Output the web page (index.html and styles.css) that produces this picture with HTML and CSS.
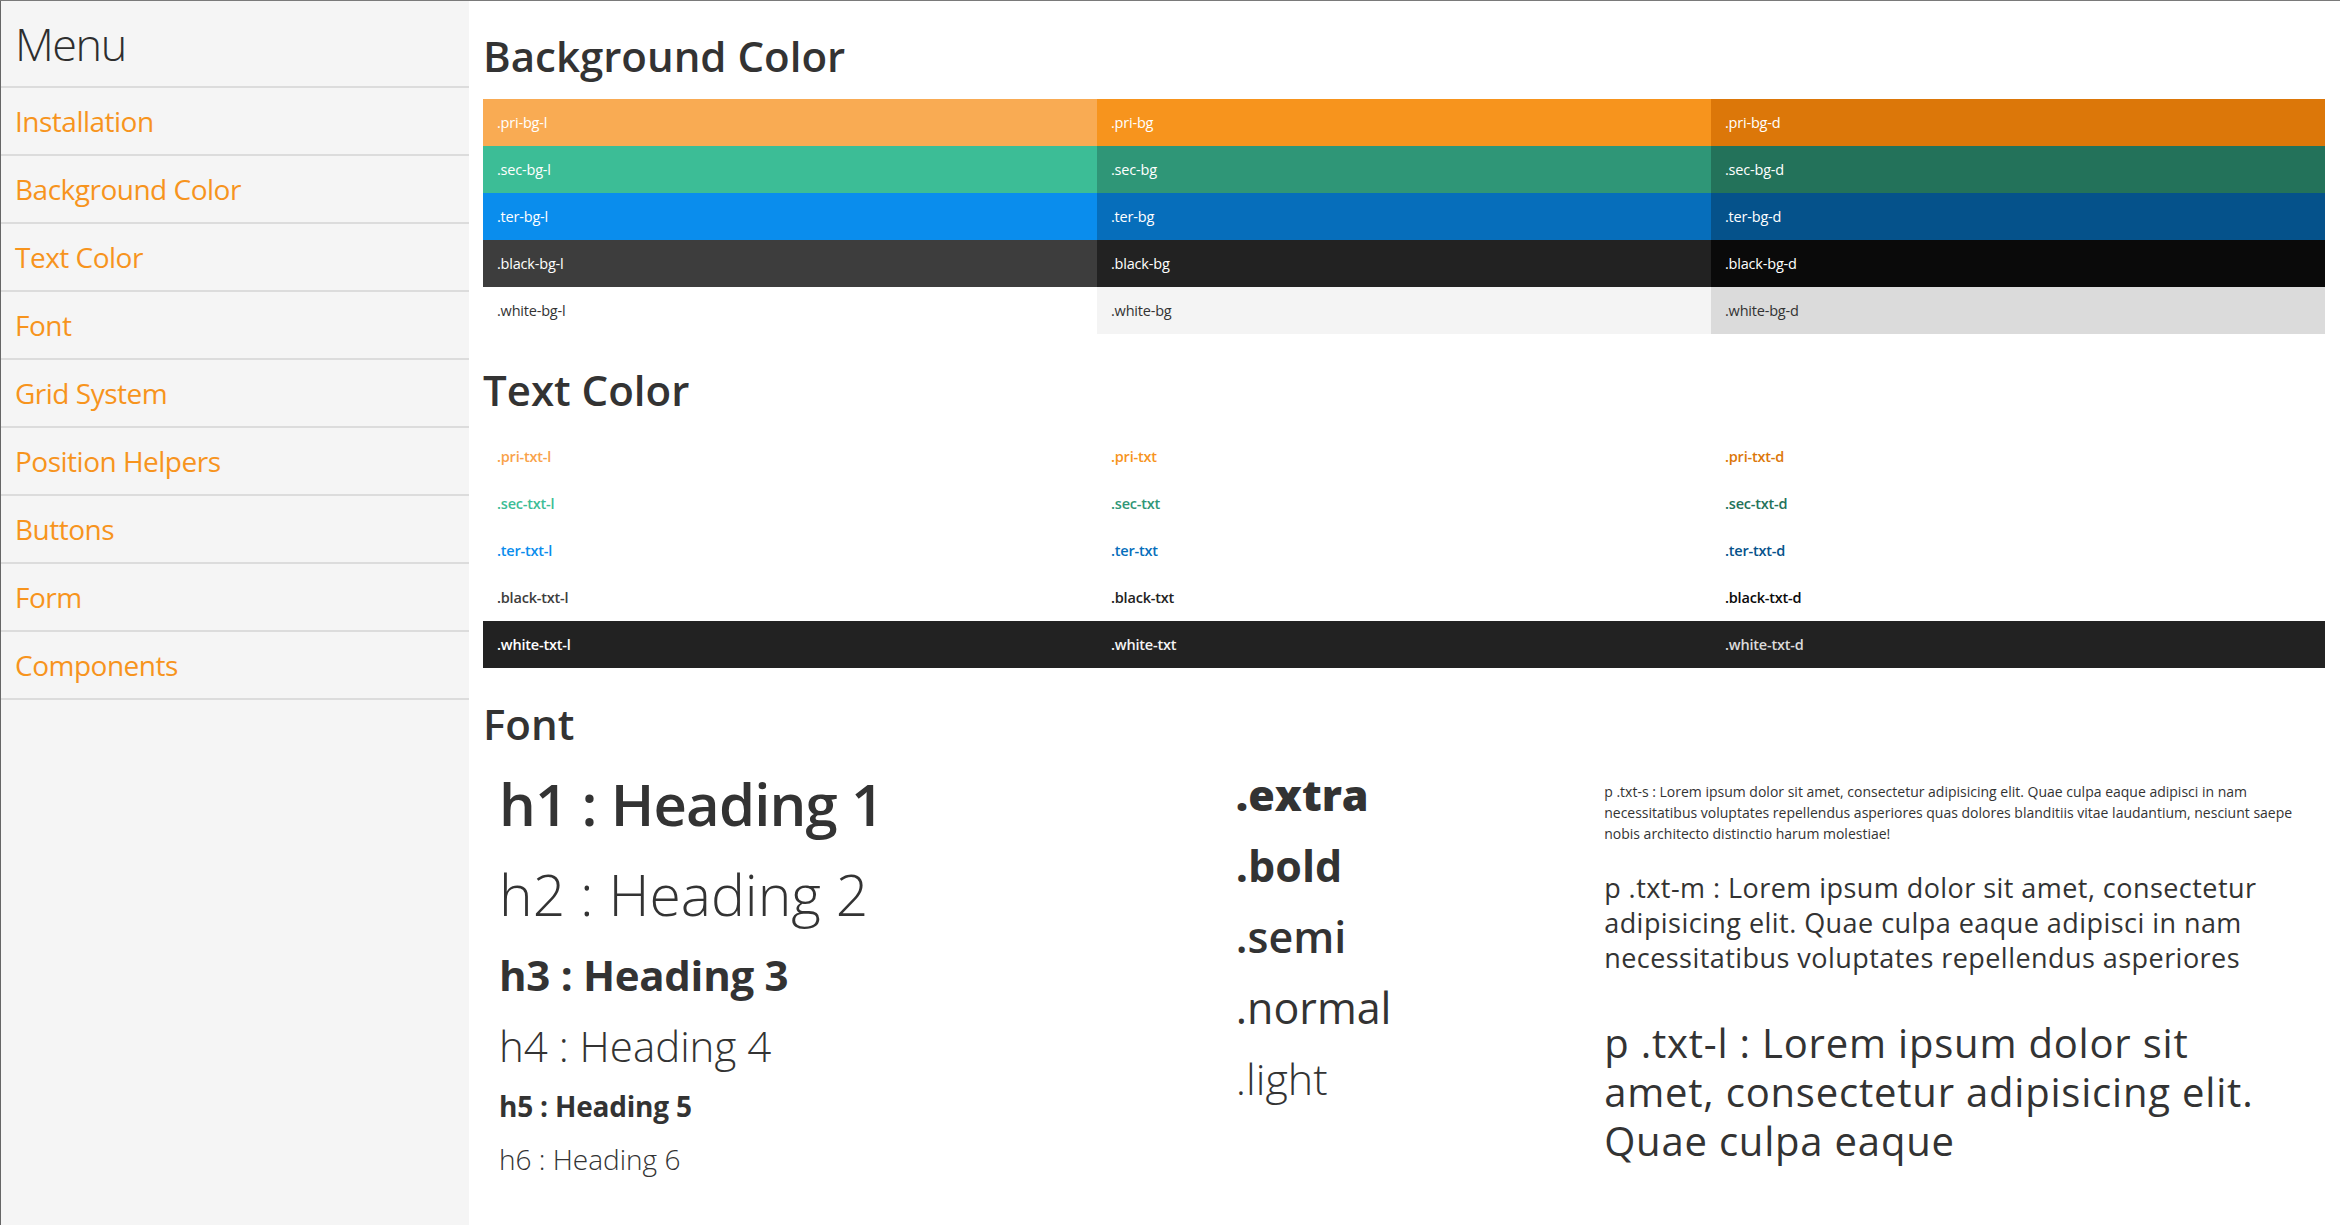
FILE: index.html
```html
<!DOCTYPE html>
<html lang="en">
<head>
  <meta charset="UTF-8">
  <meta name="viewport" content="width=device-width, initial-scale=1.0">
  <title>Style Guide</title>
  <link rel="stylesheet" href="styles.css">
</head>
<body>
  <nav class="sidebar">
    <div class="menu-title">Menu</div>
    <a class="menu-item" href="#installation">Installation</a>
    <a class="menu-item" href="#background-color">Background Color</a>
    <a class="menu-item" href="#text-color">Text Color</a>
    <a class="menu-item" href="#font">Font</a>
    <a class="menu-item" href="#grid">Grid System</a>
    <a class="menu-item" href="#position">Position Helpers</a>
    <a class="menu-item" href="#buttons">Buttons</a>
    <a class="menu-item" href="#form">Form</a>
    <a class="menu-item" href="#components">Components</a>
  </nav>

  <main class="content">
    <!-- background colours -->
    <section class="section" id="background-color">
      <h2 class="section-title">Background Color</h2>
      <div class="swatch-grid">
        <div class="swatch pri-bg-l">.pri-bg-l</div>
        <div class="swatch pri-bg">.pri-bg</div>
        <div class="swatch pri-bg-d">.pri-bg-d</div>
        <div class="swatch sec-bg-l">.sec-bg-l</div>
        <div class="swatch sec-bg">.sec-bg</div>
        <div class="swatch sec-bg-d">.sec-bg-d</div>
        <div class="swatch ter-bg-l">.ter-bg-l</div>
        <div class="swatch ter-bg">.ter-bg</div>
        <div class="swatch ter-bg-d">.ter-bg-d</div>
        <div class="swatch black-bg-l">.black-bg-l</div>
        <div class="swatch black-bg">.black-bg</div>
        <div class="swatch black-bg-d">.black-bg-d</div>
        <div class="swatch white-bg-l">.white-bg-l</div>
        <div class="swatch white-bg">.white-bg</div>
        <div class="swatch white-bg-d">.white-bg-d</div>
      </div>
    </section>

    <!-- text colours -->
    <section class="section" id="text-color">
      <h2 class="section-title">Text Color</h2>
      <div class="swatch-grid text-swatches">
        <div class="swatch pri-txt-l">.pri-txt-l</div>
        <div class="swatch pri-txt">.pri-txt</div>
        <div class="swatch pri-txt-d">.pri-txt-d</div>
        <div class="swatch sec-txt-l">.sec-txt-l</div>
        <div class="swatch sec-txt">.sec-txt</div>
        <div class="swatch sec-txt-d">.sec-txt-d</div>
        <div class="swatch ter-txt-l">.ter-txt-l</div>
        <div class="swatch ter-txt">.ter-txt</div>
        <div class="swatch ter-txt-d">.ter-txt-d</div>
        <div class="swatch black-txt-l">.black-txt-l</div>
        <div class="swatch black-txt">.black-txt</div>
        <div class="swatch black-txt-d">.black-txt-d</div>
        <div class="swatch black-bg white-txt-l">.white-txt-l</div>
        <div class="swatch black-bg white-txt">.white-txt</div>
        <div class="swatch black-bg white-txt-d">.white-txt-d</div>
      </div>
    </section>

    <!-- fonts -->
    <section class="section" id="font">
      <h2 class="section-title">Font</h2>
      <div class="font-grid">
        <div class="font-col">
          <h1 class="demo-h1">h1 : Heading 1</h1>
          <h2 class="demo-h2">h2 : Heading 2</h2>
          <h3 class="demo-h3">h3 : Heading 3</h3>
          <h4 class="demo-h4">h4 : Heading 4</h4>
          <h5 class="demo-h5">h5 : Heading 5</h5>
          <h6 class="demo-h6">h6 : Heading 6</h6>
        </div>
        <div class="font-col">
          <div class="weight extra">.extra</div>
          <div class="weight bold">.bold</div>
          <div class="weight semi">.semi</div>
          <div class="weight normal">.normal</div>
          <div class="weight light">.light</div>
        </div>
        <div class="font-col text-col">
          <p class="txt-s">p .txt-s : Lorem ipsum dolor sit amet, consectetur adipisicing elit. Quae culpa eaque adipisci in nam necessitatibus voluptates repellendus asperiores quas dolores blanditiis vitae laudantium, nesciunt saepe nobis architecto distinctio harum molestiae!</p>
          <p class="txt-m">p .txt-m : Lorem ipsum dolor sit amet, consectetur adipisicing elit. Quae culpa eaque adipisci in nam necessitatibus voluptates repellendus asperiores</p>
          <p class="txt-l">p .txt-l : Lorem ipsum dolor sit amet, consectetur adipisicing elit. Quae culpa eaque</p>
        </div>
      </div>
    </section>
  </main>
</body>
</html>
```
FILE: styles.css
```css
* {
  box-sizing: border-box;
  margin: 0;
  padding: 0;
}

html, body {
  height: 100%;
}

body {
  display: flex;
  min-height: 100vh;
  border-top: 1px solid #7a7a7a;
  background: #fff;
  color: #333;
  font-family: 'Open Sans', 'Noto Sans', sans-serif;
  overflow: hidden;
}

/* sidebar */
.sidebar {
  width: 469px;
  flex-shrink: 0;
  background: #f5f5f5;
  border-left: 1px solid #666;
  display: flex;
  flex-direction: column;
}

.menu-title {
  height: 87px;
  line-height: 85px;
  padding-left: 14px;
  font-size: 45px;
  font-weight: 300;
  letter-spacing: -1.5px;
  color: #2e2e2e;
  border-bottom: 2px solid #dcdcdc;
}

.menu-item {
  display: block;
  height: 68px;
  line-height: 66px;
  padding-left: 14px;
  font-size: 28px;
  font-weight: 400;
  letter-spacing: -0.5px;
  color: #f7941d;
  text-decoration: none;
  border-bottom: 2px solid #dcdcdc;
}

/* content */
.content {
  flex: 1;
  padding: 29px 15px 0 14px;
}

.section {
  margin-bottom: 30px;
}

.section-title {
  font-size: 42px;
  font-weight: 600;
  line-height: 52px;
  margin-bottom: 17px;
  color: #333;
}

.swatch-grid {
  display: grid;
  grid-template-columns: repeat(3, 1fr);
}

.swatch {
  height: 47px;
  line-height: 47px;
  padding: 0 14px;
  font-size: 14.5px;
  letter-spacing: -0.2px;
  color: #fff;
}

.text-swatches .swatch {
  font-weight: 600;
}

.pri-bg-l { background: #f9ab53; }
.pri-bg { background: #f7941d; }
.pri-bg-d { background: #dc7709; }
.sec-bg-l { background: #3cbd96; }
.sec-bg { background: #2f9677; }
.sec-bg-d { background: #23725a; }
.ter-bg-l { background: #0a8ded; }
.ter-bg { background: #066ebb; }
.ter-bg-d { background: #05528b; }
.black-bg-l { background: #3d3d3d; }
.black-bg { background: #222; }
.black-bg-d { background: #0a0a0a; }
.white-bg-l { background: #fff; color: #333; }
.white-bg { background: #f4f4f4; color: #333; }
.white-bg-d { background: #dbdbdb; color: #333; }

.pri-txt-l { color: #f9a24a; }
.pri-txt { color: #f7941d; }
.pri-txt-d { color: #dc7709; }
.sec-txt-l { color: #3cbd96; }
.sec-txt { color: #2f9677; }
.sec-txt-d { color: #23725a; }
.ter-txt-l { color: #0a8ded; }
.ter-txt { color: #066ebb; }
.ter-txt-d { color: #05528b; }
.black-txt-l { color: #3d3d3d; }
.black-txt { color: #222; }
.black-txt-d { color: #0a0a0a; }
.white-txt-l { color: #fff; }
.white-txt { color: #f4f4f4; }
.white-txt-d { color: #dbdbdb; }

/* font samples */
.font-grid {
  display: grid;
  grid-template-columns: 40% 20% 40%;
  margin-top: -8px;
}

.font-col {
  padding: 0 16px;
}

.text-col {
  padding-right: 26px;
}

.demo-h1, .demo-h2, .demo-h3, .demo-h4, .demo-h5, .demo-h6 {
  color: #333;
}

.demo-h1 { font-size: 58px; font-weight: 600; line-height: 90px; letter-spacing: -0.85px; }
.demo-h2 { font-size: 57px; font-weight: 300; line-height: 90px; }
.demo-h3 { font-size: 42px; font-weight: 700; line-height: 72px; letter-spacing: -0.3px; }
.demo-h4 { font-size: 42px; font-weight: 300; line-height: 70px; }
.demo-h5 { font-size: 28px; font-weight: 700; line-height: 51px; letter-spacing: -0.2px; }
.demo-h6 { font-size: 28px; font-weight: 300; line-height: 55px; }

.weight {
  font-size: 43px;
  line-height: 71px;
}

.extra { font-weight: 800; }
.bold { font-weight: 700; }
.semi { font-weight: 600; }
.normal { font-weight: 400; }
.light { font-weight: 300; }

.txt-s {
  margin-top: 22px;
  font-size: 14px;
  line-height: 21px;
}

.txt-m {
  margin-top: 26px;
  font-size: 27px;
  line-height: 35px;
  letter-spacing: 0.45px;
}

.txt-l {
  margin-top: 43px;
  font-size: 40px;
  line-height: 49px;
  letter-spacing: 0.8px;
}
```
